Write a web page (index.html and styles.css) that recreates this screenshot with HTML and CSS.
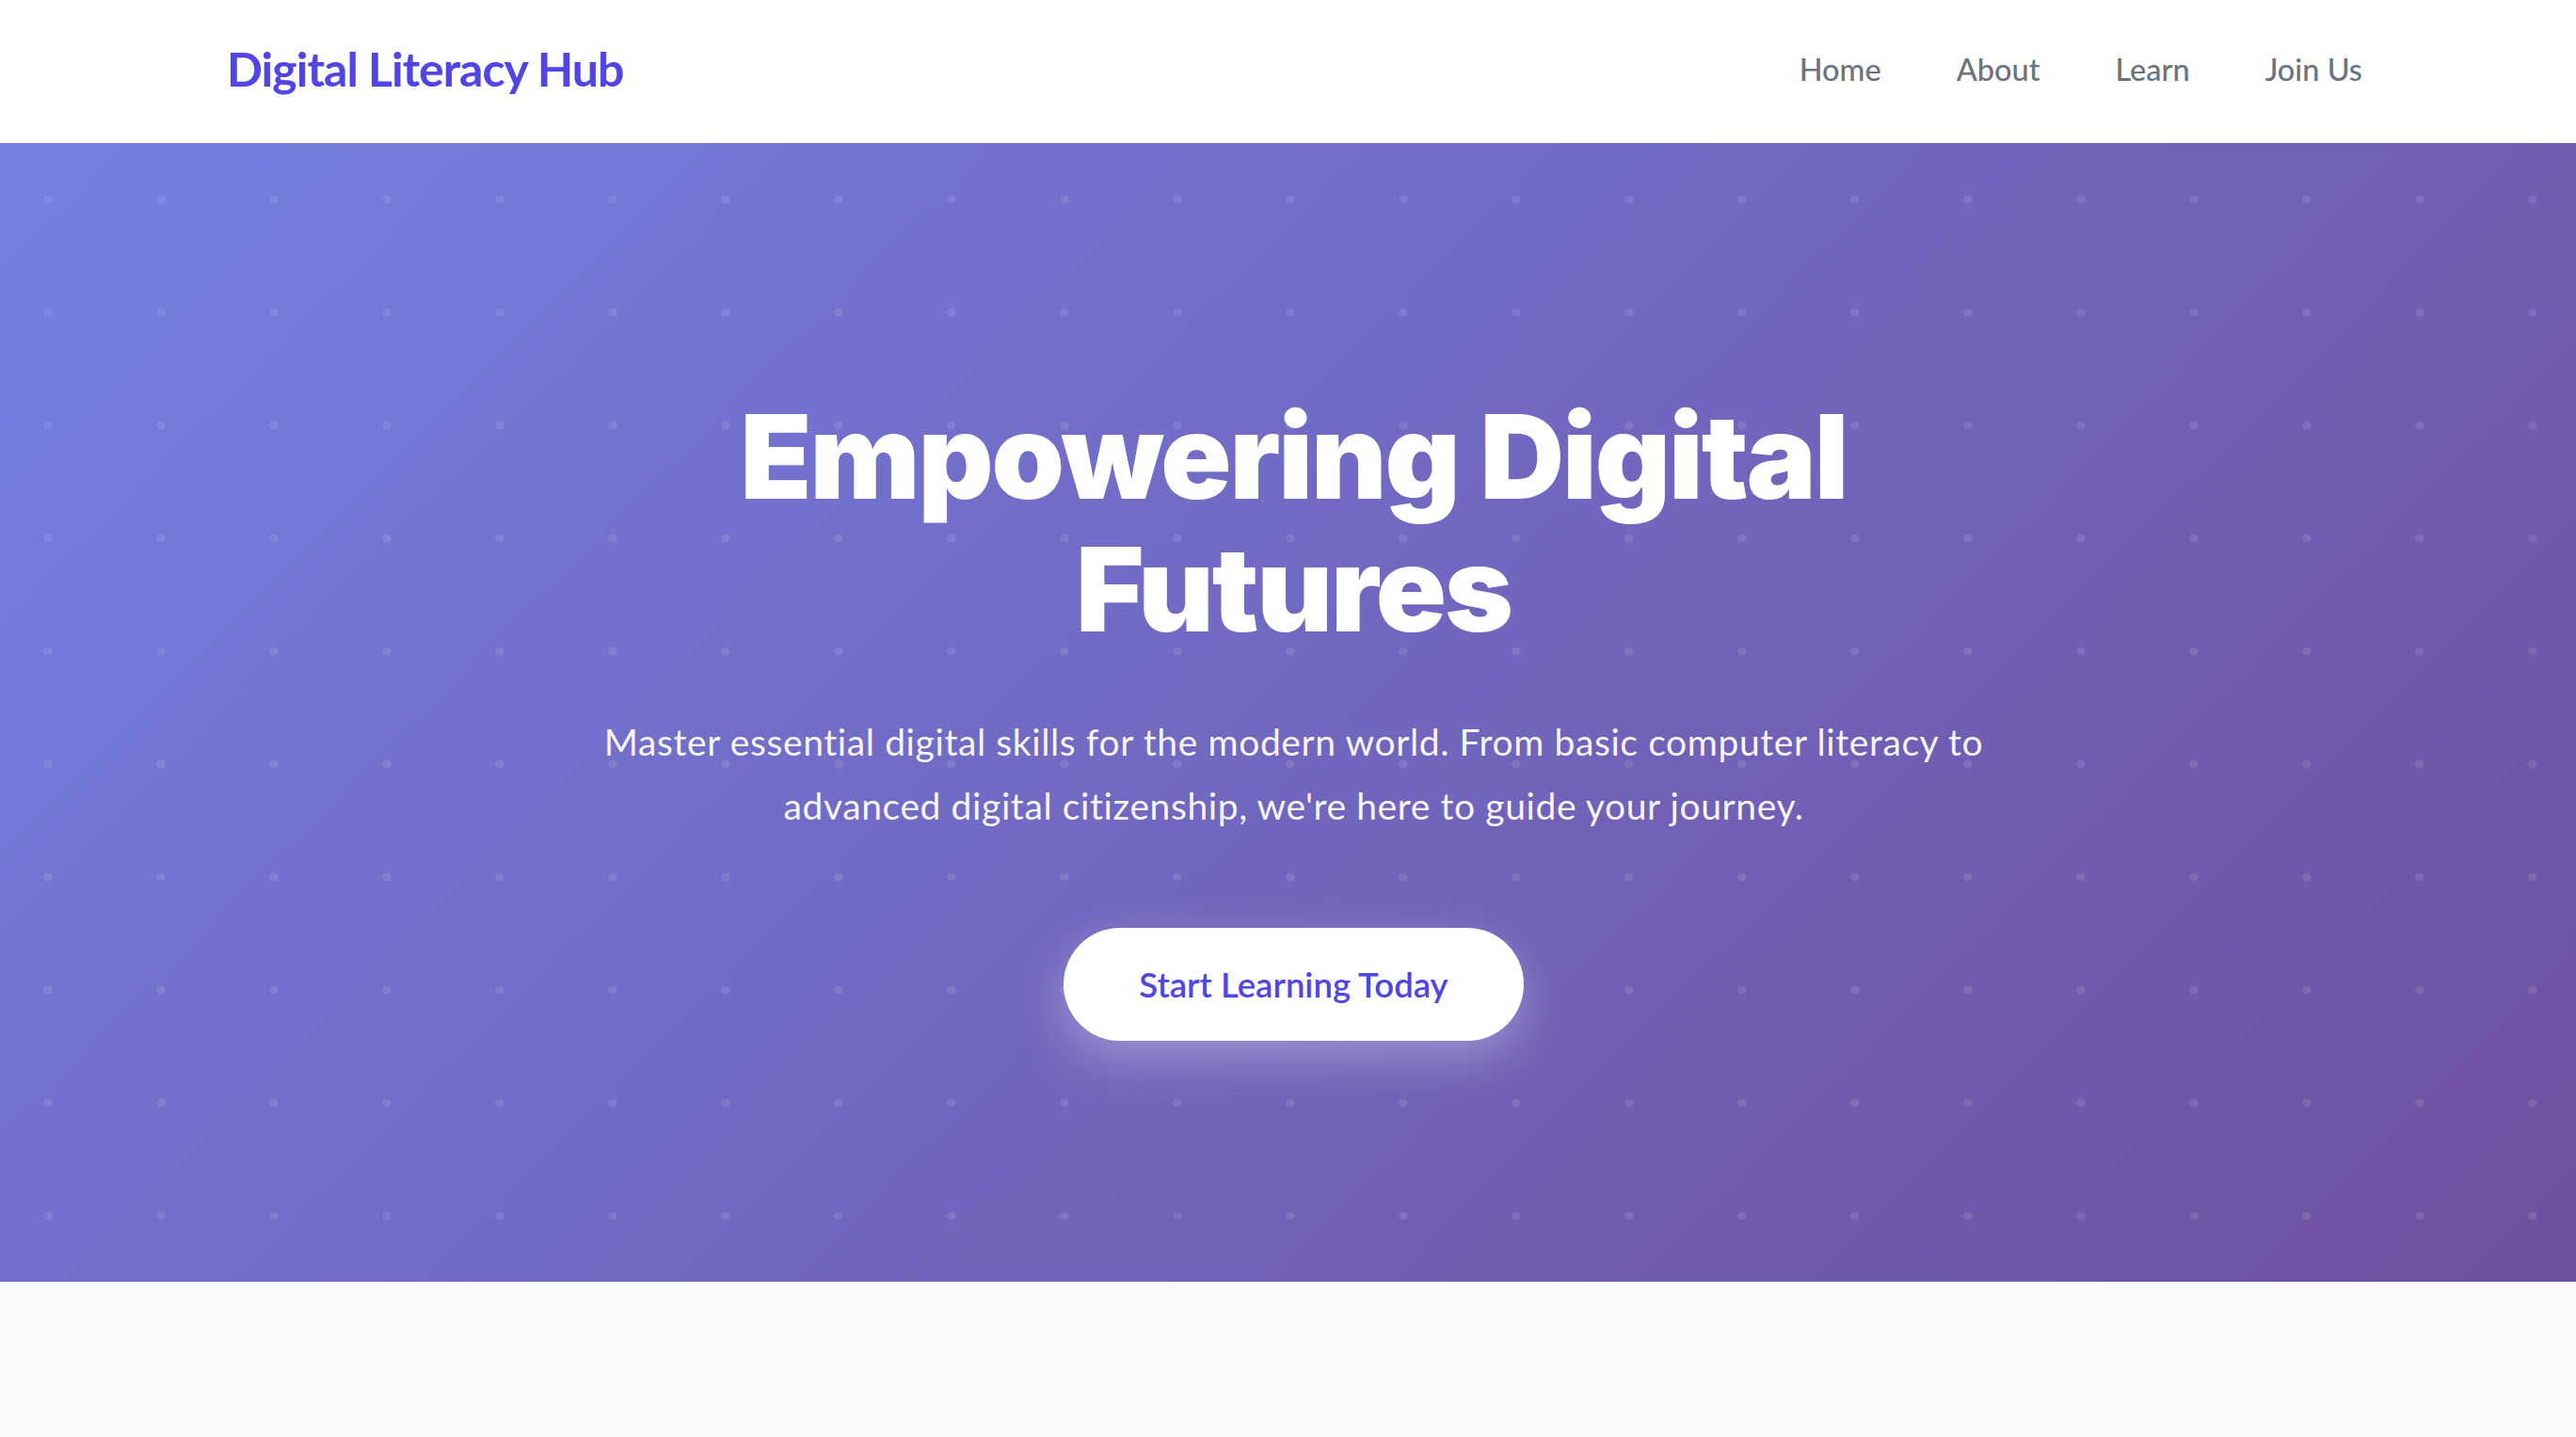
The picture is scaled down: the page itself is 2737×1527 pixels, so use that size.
FILE: index.html
```html
<!DOCTYPE html>
<html lang="en">
<head>
<meta charset="utf-8">
<title>Digital Literacy Hub</title>
<link rel="stylesheet" href="styles.css">
</head>
<body>
<header class="site-header">
  <a class="logo" href="#">Digital Literacy Hub</a>
  <nav class="main-nav">
    <a href="#">Home</a>
    <a href="#">About</a>
    <a href="#">Learn</a>
    <a href="#">Join Us</a>
  </nav>
</header>
<section class="hero">
  <h1 class="hero-title">Empowering Digital<br>Futures</h1>
  <p class="hero-text">Master essential digital skills for the modern world. From basic computer literacy to advanced digital citizenship, we're here to guide your journey.</p>
  <a class="cta" href="#">Start Learning Today</a>
</section>
<main class="content"></main>
</body>
</html>
```
FILE: styles.css
```css
* { box-sizing: border-box; }
html, body { margin: 0; padding: 0; }
body {
  background: #f8fafc;
  font-family: "Lato", "Open Sans", sans-serif;
  height: 1527px;
  overflow: hidden;
}
a { text-decoration: none; }
.site-header {
  height: 152px;
  background: #ffffff;
  display: flex;
  align-items: center;
  justify-content: space-between;
  padding: 0 227px 6px 241px;
}
.logo {
  color: #4f46e5;
  font-size: 50px;
  font-weight: 700;
  letter-spacing: -1px;
}
.main-nav {
  display: flex;
  gap: 80px;
}
.main-nav a {
  color: #6b7280;
  font-size: 32.5px;
  font-weight: 500;
}
.hero {
  height: 1210px;
  display: flex;
  flex-direction: column;
  align-items: center;
  justify-content: center;
  padding: 7px 0 0 12px;
  text-align: center;
  color: #fff;
  background-color: #7169c6;
  background-image:
    radial-gradient(circle, rgba(255,255,255,0.1) 4.3px, rgba(255,255,255,0) 5px),
    linear-gradient(135deg, #7480e1 0%, #6f4f9f 100%);
  background-size: 120px 120px, 100% 100%;
  background-position: -9px 0, 0 0;
}
.hero-title {
  margin: 0 0 57px;
  font-family: "Inter", "Lato", sans-serif;
  font-size: 124px;
  line-height: 141px;
  font-weight: 900;
  letter-spacing: -2px;
}
.hero-text {
  margin: 0 0 96px;
  max-width: 1500px;
  font-size: 39px;
  line-height: 68px;
  letter-spacing: 0.6px;
  color: rgba(255,255,255,0.95);
}
.cta {
  display: inline-block;
  background: #ffffff;
  color: #4f46e5;
  font-size: 36.5px;
  font-weight: 600;
  line-height: 40px;
  padding: 40px 80px;
  border-radius: 60px;
  box-shadow: 0 18px 52px rgba(255,255,255,0.3);
}
.content { height: 165px; }
```
